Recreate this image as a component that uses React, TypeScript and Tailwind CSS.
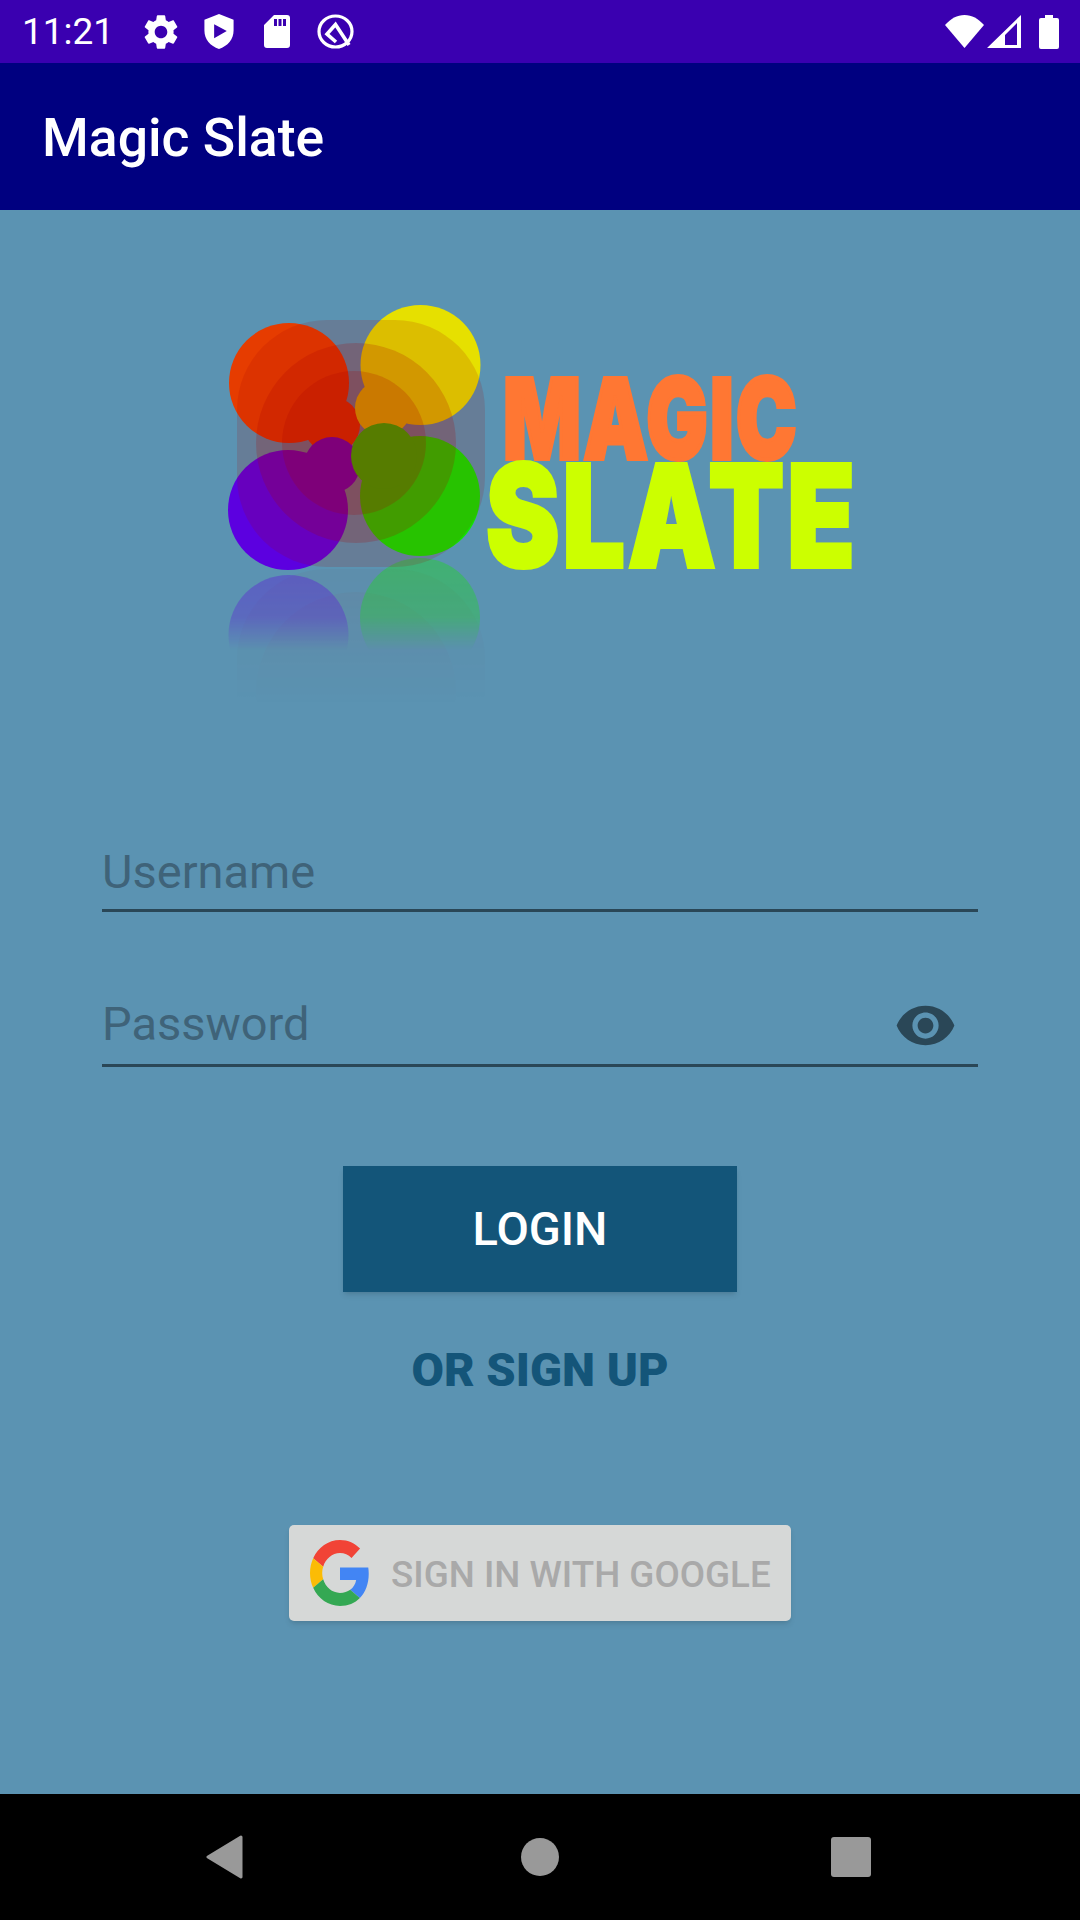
import React from "react";

const ICON_SETTINGS =
  "M19.14 12.94c.04-.3.06-.61.06-.94 0-.32-.02-.64-.07-.94l2.03-1.58c.18-.14.23-.41.12-.61l-1.92-3.32c-.12-.22-.37-.29-.59-.22l-2.39.96c-.5-.38-1.03-.7-1.62-.94l-.36-2.54c-.04-.24-.24-.41-.48-.41h-3.84c-.24 0-.43.17-.47.41l-.36 2.54c-.59.24-1.13.57-1.62.94l-2.39-.96c-.22-.08-.47 0-.59.22L2.74 8.87c-.12.21-.08.47.12.61l2.03 1.58c-.05.3-.09.63-.09.94s.02.64.07.94l-2.03 1.58c-.18.14-.23.41-.12.61l1.92 3.32c.12.22.37.29.59.22l2.39-.96c.5.38 1.03.7 1.62.94l.36 2.54c.05.24.24.41.48.41h3.84c.24 0 .44-.17.47-.41l.36-2.54c.59-.24 1.13-.56 1.62-.94l2.39.96c.22.08.47 0 .59-.22l1.92-3.32c.12-.22.07-.47-.12-.61l-2.01-1.58zM12 15.6c-1.98 0-3.6-1.62-3.6-3.6s1.62-3.6 3.6-3.6 3.6 1.62 3.6 3.6-1.62 3.6-3.6 3.6z";
const ICON_EYE =
  "M12 4.5C7 4.5 2.73 7.61 1 12c1.73 4.39 6 7.5 11 7.5s9.27-3.11 11-7.5c-1.73-4.39-6-7.5-11-7.5zM12 17c-2.76 0-5-2.24-5-5s2.24-5 5-5 5 2.24 5 5-2.24 5-5 5zm0-8c-1.66 0-3 1.34-3 3s1.34 3 3 3 3-1.34 3-3-1.34-3-3-3z";

const StatusBar = () => (
  <div className="h-[63px] bg-[#3a00b0] flex items-center text-white">
    <span className="ml-[22px] w-[118px] text-[37px] leading-none">11:21</span>
    <svg width="42" height="42" viewBox="0 0 24 24" fill="white">
      <path d={ICON_SETTINGS} />
    </svg>
    {/* shield */}
    <svg width="30" height="35" viewBox="0 0 30 36" className="ml-[22px]">
      <path
        fill="white"
        fillRule="evenodd"
        d="M15 0 L30 6 V17 C30 26 24 33 15 36 C6 33 0 26 0 17 V6 Z M10 10.500 V25 L23 17.500 Z"
      />
    </svg>
    {/* sd card */}
    <svg width="26" height="33" viewBox="0 0 26 33" className="ml-[30px]">
      <path
        fill="white"
        fillRule="evenodd"
        d="M10 0 H23 A3 3 0 0 1 26 3 V30 A3 3 0 0 1 23 33 H3 A3 3 0 0 1 0 30 V10 Z M10 4 V11 H13 V4 Z M14.500 4 V11 H17.500 V4 Z M19 4 V11 H22 V4 Z"
      />
    </svg>
    {/* q logo */}
    <svg width="37" height="35" viewBox="0 0 37 35" className="ml-[27px]">
      <ellipse cx="18.500" cy="17.500" rx="16.500" ry="15.500" fill="none" stroke="white" strokeWidth="3.200" />
      <path d="M19 28 L10 20 L18.500 10.500 L32 31" fill="none" stroke="white" strokeWidth="3.600" />
    </svg>
    <div className="ml-auto flex items-center">
      {/* wifi */}
      <svg width="39" height="33" viewBox="0 0 39 33">
        <path fill="white" d="M19.500 33 L0 10 C6 3.500 12 0 19.500 0 C27 0 33 3.500 39 10 Z" />
      </svg>
      {/* signal */}
      <svg width="34" height="33" viewBox="0 0 34 33" className="ml-[3px]">
        <path
          fill="white"
          fillRule="evenodd"
          d="M34 0 V33 H0 Z M30 8 L18 20 V30 H30 Z"
        />
      </svg>
      {/* battery */}
      <svg width="20" height="34" viewBox="0 0 20 34" className="ml-[18px] mr-[21px]">
        <path
          fill="white"
          d="M6 0 H14 V3 H18 A2 2 0 0 1 20 5 V32 A2 2 0 0 1 18 34 H2 A2 2 0 0 1 0 32 V5 A2 2 0 0 1 2 3 H6 Z"
        />
      </svg>
    </div>
  </div>
);

// petals + rings, page coordinates
const Logo = () => (
  <svg
    width="680"
    height="440"
    viewBox="200 280 680 440"
    className="block ml-[200px] mt-[70px]"
  >
    <defs>
      <linearGradient id="fadePetal" gradientUnits="userSpaceOnUse" x1="0" y1="556" x2="0" y2="650">
        <stop offset="0" stopColor="white" stopOpacity="0.36" />
        <stop offset="0.65" stopColor="white" stopOpacity="0.28" />
        <stop offset="1" stopColor="white" stopOpacity="0" />
      </linearGradient>
      <mask id="petalMask" maskUnits="userSpaceOnUse" x="200" y="550" width="400" height="170">
        <rect x="200" y="550" width="400" height="170" fill="url(#fadePetal)" />
      </mask>
      <linearGradient id="fadeRing" gradientUnits="userSpaceOnUse" x1="0" y1="568" x2="0" y2="706">
        <stop offset="0" stopColor="white" stopOpacity="0.22" />
        <stop offset="1" stopColor="white" stopOpacity="0" />
      </linearGradient>
      <mask id="ringMask" maskUnits="userSpaceOnUse" x="200" y="550" width="400" height="170">
        <rect x="200" y="550" width="400" height="170" fill="url(#fadeRing)" />
      </mask>
    </defs>

    {/* reflection */}
    <g mask="url(#ringMask)">
      <rect x="237" y="569" width="248" height="248" rx="90" fill="#aa0000" fillOpacity="0.15" />
      <circle cx="356" cy="692" r="100" fill="#aa0000" fillOpacity="0.2" />
    </g>
    <g mask="url(#petalMask)">
      <circle cx="288.500" cy="635" r="60" fill="#5c00e0" />
      <circle cx="420" cy="618" r="60" fill="#11e600" />
    </g>

    {/* petals */}
    <circle cx="289" cy="383" r="60" fill="#e63c00" />
    <circle cx="332" cy="425" r="28" fill="#e63c00" />
    <circle cx="420.500" cy="365" r="60" fill="#e6e000" />
    <circle cx="383" cy="408" r="28" fill="#e6e000" />
    <circle cx="420" cy="496" r="60" fill="#11e600" />
    <circle cx="288" cy="510" r="60" fill="#5c00e0" />
    <circle cx="332" cy="465" r="28" fill="#5c00e0" />
    <circle cx="384" cy="456" r="33" fill="#11e600" />

    {/* rings */}
    <rect x="237" y="320" width="248" height="247" rx="90" fill="#aa0000" fillOpacity="0.15" />
    <ellipse cx="356" cy="443" rx="100" ry="100" fill="#aa0000" fillOpacity="0.2" />
    <ellipse cx="354" cy="443" rx="72" ry="72" fill="#aa0000" fillOpacity="0.2" />

    {/* wordmark */}
    <text
      x="503"
      y="459"
      textLength="296"
      lengthAdjust="spacingAndGlyphs"
      fontFamily="Inter, sans-serif"
      fontWeight="900"
      fontSize="112"
      letterSpacing="3"
      fill="#ff7733"
      stroke="#ff7733"
      strokeWidth="4"
    >
      MAGIC
    </text>
    <text
      x="486"
      y="567"
      textLength="372"
      lengthAdjust="spacingAndGlyphs"
      fontFamily="Inter, sans-serif"
      fontWeight="900"
      fontSize="142"
      letterSpacing="4"
      fill="#ccff00"
      stroke="#ccff00"
      strokeWidth="4"
    >
      SLATE
    </text>
  </svg>
);

const FieldLine = ({ label, eye, height }: { label: string; eye?: boolean; height: string }) => (
  <div className={`relative border-b-[3px] border-[#2a4757] ${height}`}>
    <span className="block text-[47px] leading-[48px] text-[#3f6379]">{label}</span>
    {eye && (
      <svg
        width="63"
        height="63"
        viewBox="0 0 24 24"
        fill="#2a4757"
        className="absolute right-[21px] top-[-6px]"
      >
        <path d={ICON_EYE} />
      </svg>
    )}
  </div>
);

const GoogleG = () => (
  <svg width="60" height="66" viewBox="0 0 48 48" preserveAspectRatio="none">
    <path fill="#F14336" d="M24 9.500c3.540 0 6.710 1.220 9.210 3.600l6.850-6.850C35.900 2.380 30.470 0 24 0 14.620 0 6.510 5.380 2.560 13.220l7.980 6.190C12.430 13.720 17.740 9.500 24 9.500z" />
    <path fill="#4285F4" d="M46.980 24.550c0-1.570-.15-3.090-.38-4.550H24v9.020h12.940c-.58 2.960-2.260 5.480-4.780 7.180l7.730 6c4.510-4.180 7.090-10.360 7.090-17.650z" />
    <path fill="#FBBC05" d="M10.530 28.590c-.5-1.450-.78-2.990-.78-4.590s.27-3.140.78-4.590l-7.980-6.190C.92 16.460 0 20.120 0 24c0 3.880.92 7.540 2.560 10.780l7.970-6.190z" />
    <path fill="#34A853" d="M24 48c6.480 0 11.930-2.130 15.890-5.810l-7.730-6c-2.150 1.450-4.920 2.300-8.160 2.300-6.260 0-11.570-4.220-13.470-9.910l-7.980 6.190C6.510 42.620 14.620 48 24 48z" />
  </svg>
);

const NavBar = () => (
  <div className="h-[126px] bg-black relative flex items-center">
    <svg width="40" height="44" viewBox="0 0 40 44" className="ml-[205px]">
      <path d="M36 2 L3 22 L36 42 Z" fill="#999999" stroke="#999999" strokeWidth="3" strokeLinejoin="round" />
    </svg>
    <div className="ml-[276px] w-[38px] h-[38px] rounded-full bg-[#999999]" />
    <div className="ml-[272px] w-[40px] h-[40px] rounded-[3px] bg-[#999999]" />
  </div>
);

export default function App() {
  return (
    <div className="w-[1080px] h-[1920px] flex flex-col bg-[#5b93b2] font-['Roboto',sans-serif]">
      <StatusBar />
      <div className="h-[147px] bg-[#000080] flex items-center pl-[42px] pt-[3px]">
        <span className="text-[53.500px] font-medium text-white leading-none">Magic Slate</span>
      </div>

      <div className="flex-1 flex flex-col">
        <Logo />

        <div className="mx-[102px] mt-[128px] flex flex-col gap-[88px]">
          <FieldLine label="Username" height="h-[64px]" />
          <FieldLine label="Password" eye height="h-[67px]" />
        </div>

        <div className="mt-[99px] flex flex-col items-center">
          <button className="w-[394px] h-[126px] bg-[#135579] text-white text-[47px] font-medium shadow-md">
            LOGIN
          </button>
          <span className="mt-[50px] text-[47px] leading-[55px] font-black text-[#145579]">OR SIGN UP</span>
          <div className="mt-[128px] w-[502px] h-[96px] bg-[#d6d8d7] rounded-[5px] shadow-md flex items-center pl-[21px]">
            <GoogleG />
            <span className="ml-[21px] pt-[3px] text-[36.750px] font-medium text-[#a9a9a9]">SIGN IN WITH GOOGLE</span>
          </div>
        </div>
      </div>

      <NavBar />
    </div>
  );
}
